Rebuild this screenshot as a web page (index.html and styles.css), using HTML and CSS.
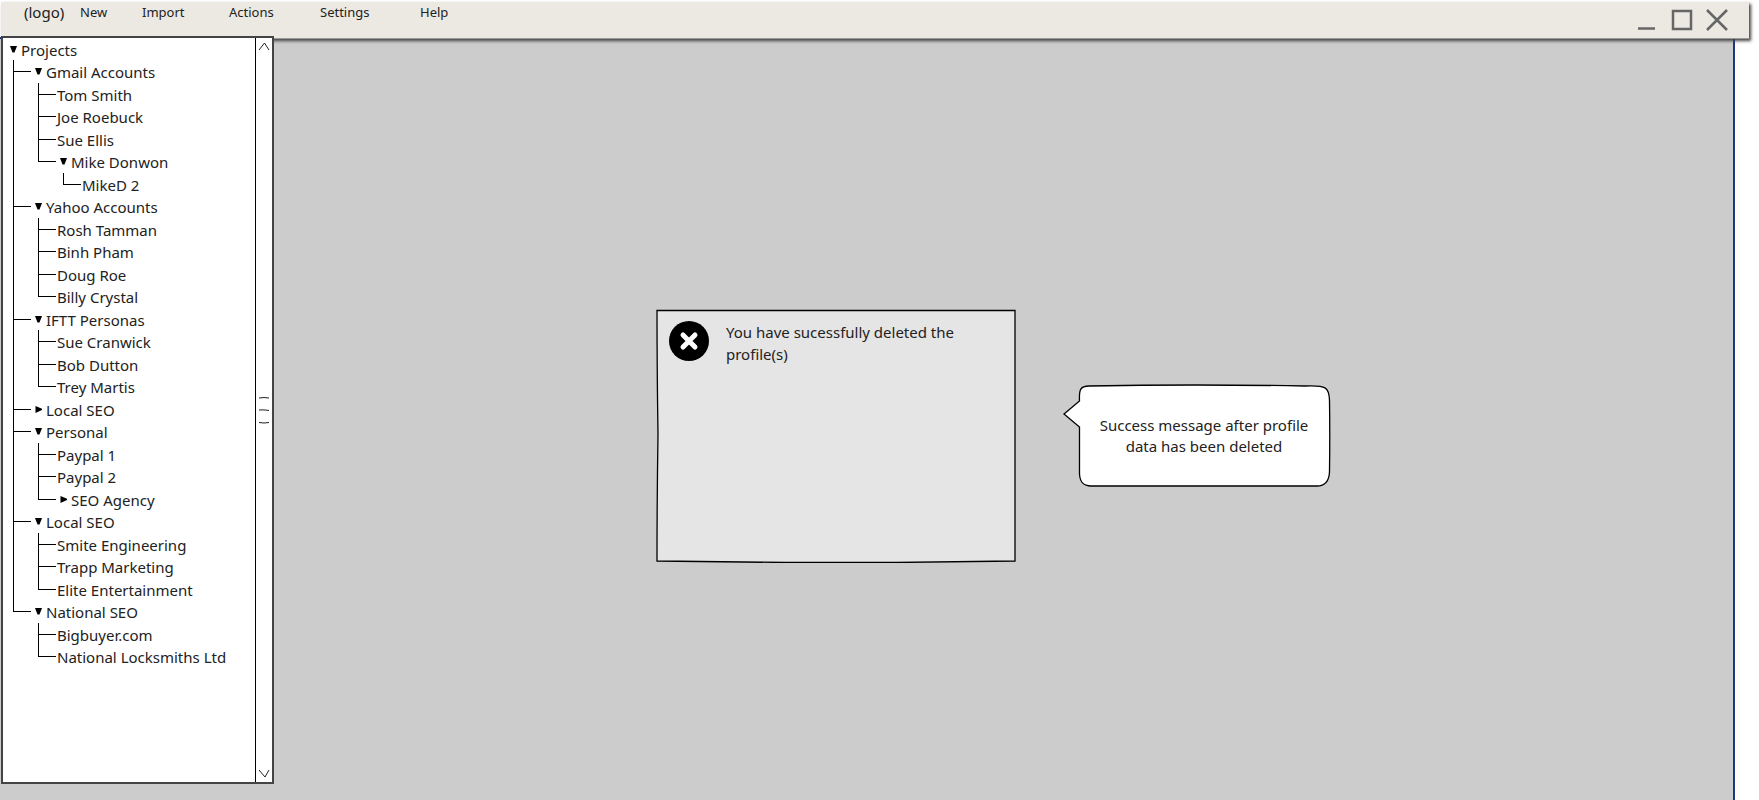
FILE: index.html
```html
<!DOCTYPE html>
<html lang="en">
<head>
<meta charset="utf-8">
<title>Projects</title>
<link rel="stylesheet" href="styles.css">
</head>
<body>
<svg class="defs" aria-hidden="true">
  <symbol id="down" viewBox="0 0 7 7"><path d="M0 0H7L4.500 6.500H2.500Z"/></symbol>
  <symbol id="right" viewBox="0 0 7 7"><path d="M0.500 0L7 2.800V4L0.500 7Z"/></symbol>
</svg>
<header class="titlebar">
  <span class="logo">(logo)</span>
  <nav class="menu">
    <button type="button">New</button>
    <button type="button">Import</button>
    <button type="button">Actions</button>
    <button type="button">Settings</button>
    <button type="button">Help</button>
  </nav>
  <div class="controls">
    <button type="button" aria-label="Minimize"><svg viewBox="0 0 22 22"><path d="M2 19.500H19"/></svg></button>
    <button type="button" aria-label="Maximize"><svg viewBox="0 0 22 22"><path d="M2 2H20V20H2Z"/></svg></button>
    <button type="button" aria-label="Close"><svg viewBox="0 0 22 22"><path d="M1 1L21 21M21 1L1 21"/></svg></button>
  </div>
</header>
<main class="workspace">
  <aside class="sidebar">
    <ul class="tree">
      <li><button type="button"><svg><use href="#down"/></svg>Projects</button></li>
      <li><i class="tee"></i><button type="button"><svg><use href="#down"/></svg>Gmail Accounts</button></li>
      <li><i class="pass"></i><i class="tee leaf"></i><a href="#">Tom Smith</a></li>
      <li><i class="pass"></i><i class="tee leaf"></i><a href="#">Joe Roebuck</a></li>
      <li><i class="pass"></i><i class="tee leaf"></i><a href="#">Sue Ellis</a></li>
      <li><i class="pass"></i><i class="end"></i><button type="button"><svg><use href="#down"/></svg>Mike Donwon</button></li>
      <li><i class="pass"></i><i></i><i class="end leaf"></i><a href="#">MikeD 2</a></li>
      <li><i class="tee"></i><button type="button"><svg><use href="#down"/></svg>Yahoo Accounts</button></li>
      <li><i class="pass"></i><i class="tee leaf"></i><a href="#">Rosh Tamman</a></li>
      <li><i class="pass"></i><i class="tee leaf"></i><a href="#">Binh Pham</a></li>
      <li><i class="pass"></i><i class="tee leaf"></i><a href="#">Doug Roe</a></li>
      <li><i class="pass"></i><i class="end leaf"></i><a href="#">Billy Crystal</a></li>
      <li><i class="tee"></i><button type="button"><svg><use href="#down"/></svg>IFTT Personas</button></li>
      <li><i class="pass"></i><i class="tee leaf"></i><a href="#">Sue Cranwick</a></li>
      <li><i class="pass"></i><i class="tee leaf"></i><a href="#">Bob Dutton</a></li>
      <li><i class="pass"></i><i class="end leaf"></i><a href="#">Trey Martis</a></li>
      <li><i class="tee"></i><button type="button"><svg><use href="#right"/></svg>Local SEO</button></li>
      <li><i class="tee"></i><button type="button"><svg><use href="#down"/></svg>Personal</button></li>
      <li><i class="pass"></i><i class="tee leaf"></i><a href="#">Paypal 1</a></li>
      <li><i class="pass"></i><i class="tee leaf"></i><a href="#">Paypal 2</a></li>
      <li><i class="pass"></i><i class="end"></i><button type="button"><svg><use href="#right"/></svg>SEO Agency</button></li>
      <li><i class="tee"></i><button type="button"><svg><use href="#down"/></svg>Local SEO</button></li>
      <li><i class="pass"></i><i class="tee leaf"></i><a href="#">Smite Engineering</a></li>
      <li><i class="pass"></i><i class="tee leaf"></i><a href="#">Trapp Marketing</a></li>
      <li><i class="pass"></i><i class="end leaf"></i><a href="#">Elite Entertainment</a></li>
      <li><i class="end"></i><button type="button"><svg><use href="#down"/></svg>National SEO</button></li>
      <li><i></i><i class="tee leaf"></i><a href="#">Bigbuyer.com</a></li>
      <li><i></i><i class="end leaf"></i><a href="#">National Locksmiths Ltd</a></li>
    </ul>
    <div class="scrollbar">
      <button type="button" aria-label="Scroll up"><svg viewBox="0 0 12 9"><path d="M1 8L6.500 1L11 8"/></svg></button>
      <svg class="grip" viewBox="0 0 12 28"><path d="M1 2Q6 1 11 2M1 14Q6 13.500 11 14.500M1 26.500Q6 27.500 11 26.500"/></svg>
      <button type="button" aria-label="Scroll down"><svg viewBox="0 0 12 9"><path d="M1 1L7 8L11 1"/></svg></button>
    </div>
  </aside>
  <section class="stage">
    <div class="dialog" role="alertdialog" aria-labelledby="message">
      <svg class="outline" viewBox="0 0 360 254" preserveAspectRatio="none"><path d="M1 1.500H359V252Q300 253 240 253.500H130Q60 252.500 1 252Q1 190 2 125Q1 60 1 1.500Z"/></svg>
      <svg class="badge" viewBox="0 0 40 40"><circle cx="20" cy="20" r="20"/><path d="M14 14L26 26M26 14L14 26"/></svg>
      <p id="message">You have sucessfully deleted the profile(s)</p>
    </div>
    <div class="callout">
      <svg class="outline" viewBox="0 0 268 104" preserveAspectRatio="none"><path d="M26 2Q130 0 242 2C264 1 266 4 266.500 16Q267 50 266.500 88C266 98 262 102 254 102H28C20 102 17 98 16.500 90V43L1 30L16.500 17C16 6 17 2 26 2Z"/></svg>
      <p>Success message after profile data has been deleted</p>
    </div>
  </section>
</main>
</body>
</html>
```
FILE: styles.css
```css
* {
  box-sizing: border-box;
}

body {
  margin: 0;
  min-height: 100vh;
  padding-top: 2px;
  display: flex;
  flex-direction: column;
  background: #fff;
  color: #222;
  font: 15px/22px "Noto Sans", sans-serif;
}

button {
  margin: 0;
  padding: 0;
  border: 0;
  background: none;
  color: inherit;
  font: inherit;
  text-align: left;
  cursor: pointer;
}

a {
  color: inherit;
  text-decoration: none;
}

svg {
  display: block;
  flex: none;
}

.defs {
  position: absolute;
  width: 0;
  height: 0;
}

.titlebar {
  position: relative;
  z-index: 1;
  display: flex;
  align-items: flex-start;
  height: 37px;
  margin: 0 10px 0 1px;
  padding-left: 23px;
  background: #ebe9e2;
  border-bottom: 1px solid #999;
  box-shadow: 2px 2px 3px #444;
}

.logo {
  width: 56px;
  line-height: 20px;
}

.menu {
  display: grid;
  grid-template-columns: 62px 87px 91px 100px auto;
  font-size: 13px;
  line-height: 20px;
}

.controls {
  display: flex;
  gap: 13px;
  margin-left: auto;
  padding: 7px 21px 0 0;
}

.controls svg {
  width: 22px;
  height: 22px;
  fill: none;
  stroke: #666;
  stroke-width: 2.5;
}

.workspace {
  flex: 1;
  display: flex;
  margin: -2px 24px 0 0;
  background: #ccc;
  border-top: 2px solid #1c3687;
  border-right: 2px solid #1c3687;
}

.sidebar {
  position: relative;
  z-index: 2;
  display: flex;
  width: 273px;
  margin: -3px 0 16px 1px;
  background: #fff;
  border: 2px solid #444;
}

.tree {
  flex: 1;
  display: grid;
  grid-auto-rows: 22px 23px;
  align-content: start;
  margin: 0;
  padding: 0 0 0 7px;
  line-height: 24px;
  list-style: none;
}

.tree li {
  display: flex;
  white-space: nowrap;
}

.tree button {
  display: flex;
  gap: 4px;
}

.tree button svg {
  width: 7px;
  height: 7px;
  margin-top: 8px;
}

.tree i {
  position: relative;
  width: 25px;
}

.tree .leaf {
  width: 22px;
}

.tree .pass::before,
.tree .tee::before,
.tree .end::before {
  content: "";
  position: absolute;
  left: 3px;
  top: 0;
  bottom: 0;
  border-left: 1px solid #000;
}

.tree .end::before {
  bottom: auto;
  height: 12px;
}

.tree .tee::after,
.tree .end::after {
  content: "";
  position: absolute;
  left: 3px;
  top: 11px;
  width: 18px;
  border-top: 1px solid #000;
}

.scrollbar {
  display: flex;
  flex-direction: column;
  align-items: center;
  justify-content: space-between;
  width: 17px;
  padding: 4px 0;
  border-left: 1px solid #000;
}

.scrollbar svg {
  width: 12px;
  fill: none;
  stroke: #222;
}

.scrollbar button svg {
  height: 9px;
}

.scrollbar .grip {
  height: 28px;
}

.stage {
  flex: 1;
  display: flex;
  align-items: center;
  justify-content: center;
  gap: 47px;
  padding: 33px 20px 0 0;
}

.dialog,
.callout {
  position: relative;
  display: flex;
}

.dialog {
  gap: 17px;
  width: 360px;
  min-height: 254px;
  padding: 12px 13px;
}

.outline {
  position: absolute;
  inset: 0;
  width: 100%;
  height: 100%;
  stroke: #000;
  stroke-width: 1.3;
}

.dialog .outline {
  fill: #e5e5e5;
}

.callout .outline {
  fill: #fff;
}

.badge {
  position: relative;
  width: 40px;
  height: 40px;
}

.badge path {
  stroke: #fff;
  stroke-width: 5;
  stroke-linecap: round;
}

p {
  position: relative;
  margin: 0;
}

.callout {
  align-items: center;
  justify-content: center;
  width: 268px;
  min-height: 104px;
  padding: 0 16px 0 30px;
  line-height: 21px;
  text-align: center;
}
```
